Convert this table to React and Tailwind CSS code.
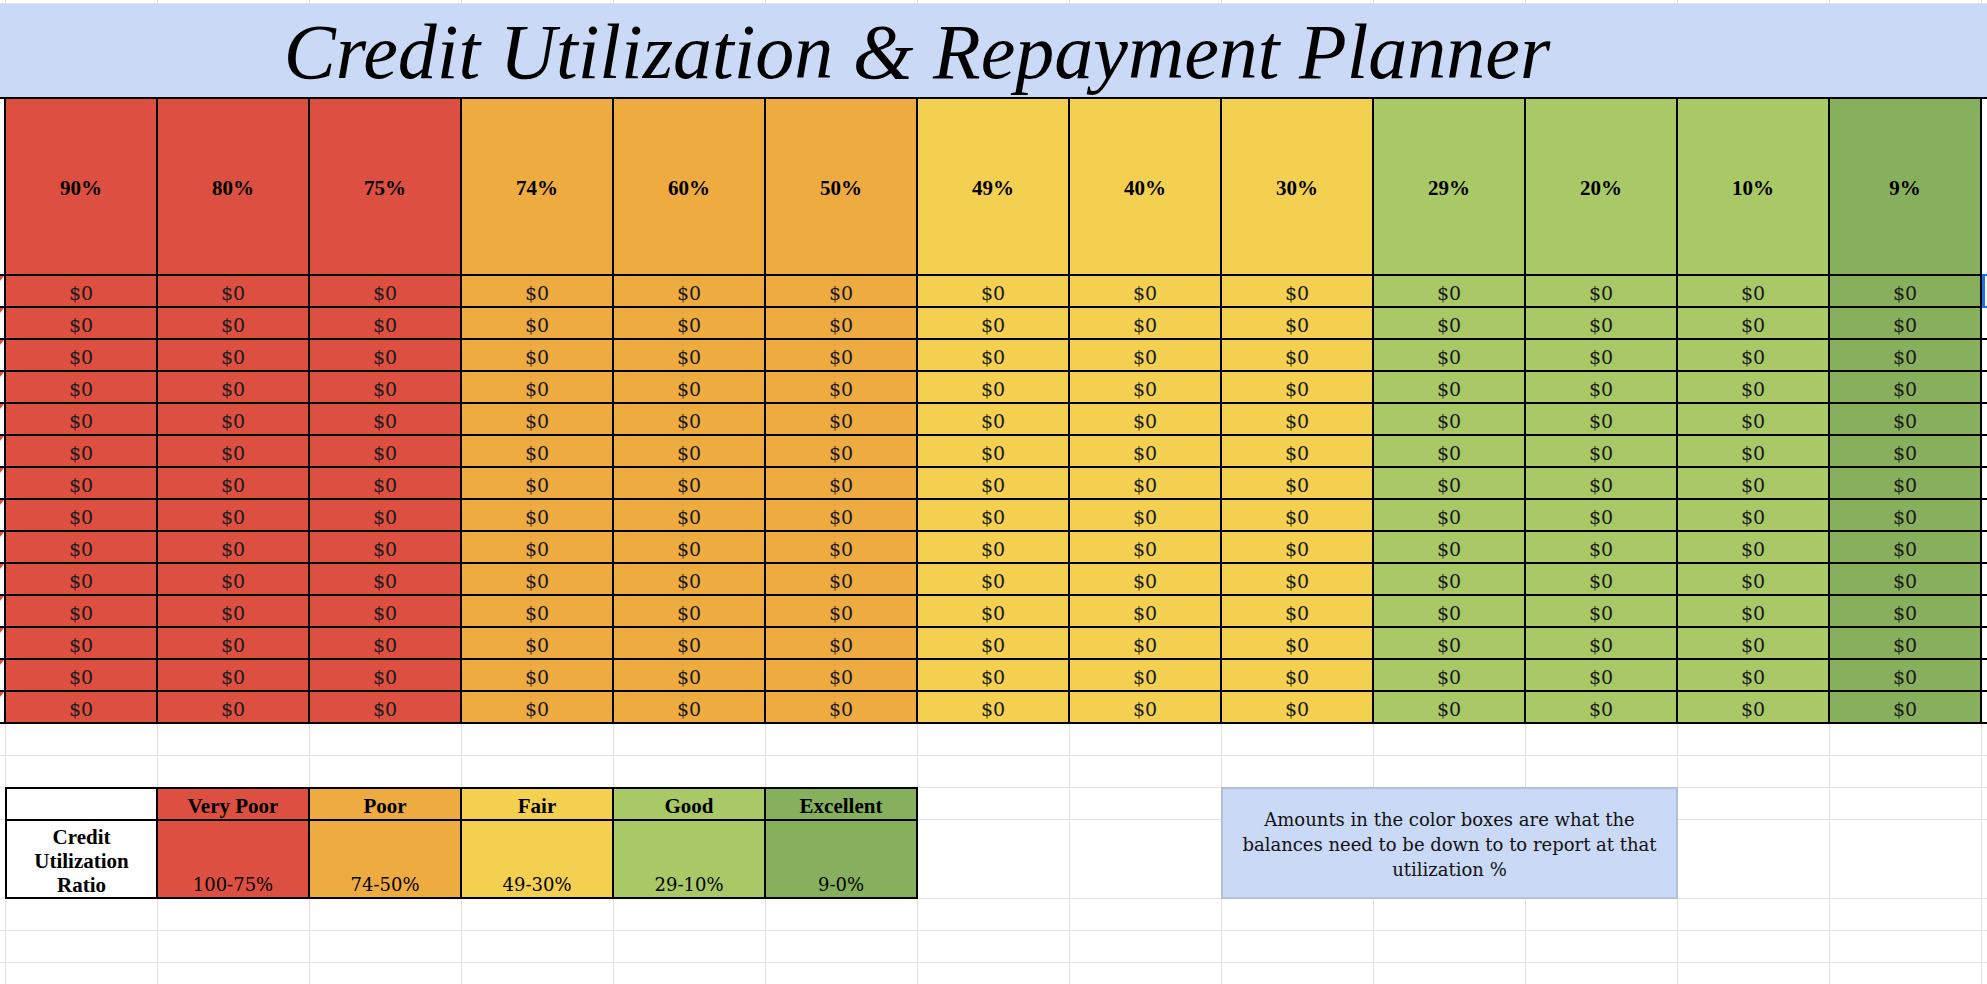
import React from "react";

const boldFont = "font-['Liberation_Serif',serif] font-bold";
const bodyFont = "font-['DejaVu_Serif',serif]";

const columns = [
  { pct: "90%", bg: "bg-[#dd4f41]" },
  { pct: "80%", bg: "bg-[#dd4f41]" },
  { pct: "75%", bg: "bg-[#dd4f41]" },
  { pct: "74%", bg: "bg-[#eeab40]" },
  { pct: "60%", bg: "bg-[#eeab40]" },
  { pct: "50%", bg: "bg-[#eeab40]" },
  { pct: "49%", bg: "bg-[#f3d04f]" },
  { pct: "40%", bg: "bg-[#f3d04f]" },
  { pct: "30%", bg: "bg-[#f3d04f]" },
  { pct: "29%", bg: "bg-[#a9c966]" },
  { pct: "20%", bg: "bg-[#a9c966]" },
  { pct: "10%", bg: "bg-[#a9c966]" },
  { pct: "9%", bg: "bg-[#87b05c]" },
];

const legend = [
  { name: "Very Poor", range: "100-75%", bg: "bg-[#dd4f41]" },
  { name: "Poor", range: "74-50%", bg: "bg-[#eeab40]" },
  { name: "Fair", range: "49-30%", bg: "bg-[#f3d04f]" },
  { name: "Good", range: "29-10%", bg: "bg-[#a9c966]" },
  { name: "Excellent", range: "9-0%", bg: "bg-[#87b05c]" },
];

const dataRows = Array.from({ length: 14 }, (_, i) => i);
const blankCells = Array.from({ length: 87 }, (_, i) => i);
const topCells = Array.from({ length: 15 }, (_, i) => i);

function CommentMark() {
  return (
    <svg width="4" height="5" viewBox="0 0 4 5" className="block">
      <polygon points="0,0 4,0 0,5" fill="#dd4f41" />
    </svg>
  );
}

function Legend() {
  return (
    <div className="col-start-2 col-span-6 row-start-3 row-span-2 -m-px grid grid-cols-[149px_repeat(5,150px)] grid-rows-[30px_76px] gap-[2px] bg-black p-[2px] text-black">
      <div className="bg-white" />
      {legend.map((l) => (
        <div
          key={l.name}
          className={`${l.bg} ${boldFont} pt-[2px] text-center text-[21px] leading-[30px]`}
        >
          {l.name}
        </div>
      ))}
      <div
        className={`flex items-end justify-center bg-white text-center text-[21px] leading-[24px] ${boldFont}`}
      >
        <span>
          Credit
          <br />
          Utilization
          <br />
          Ratio
        </span>
      </div>
      {legend.map((l) => (
        <div
          key={l.range}
          className={`${l.bg} ${bodyFont} flex items-end justify-center text-[18px] leading-[24px]`}
        >
          {l.range}
        </div>
      ))}
    </div>
  );
}

function Note() {
  return (
    <div
      className={`col-start-10 col-span-3 row-start-3 row-span-2 -m-px flex items-center justify-center border-2 border-[#b1bfd9] bg-[#cad9f5] pt-[2px] text-center text-[18px] leading-[25px] text-[#111] ${bodyFont}`}
    >
      <p>
        Amounts in the color boxes are what the
        <br />
        balances need to be down to to report at that
        <br />
        utilization %
      </p>
    </div>
  );
}

export default function App() {
  return (
    <div className="h-[984px] w-[1987px] overflow-hidden bg-white text-black">
      {/* sliver of the row above the title */}
      <div className="grid grid-cols-[5px_repeat(13,151px)_5px] gap-x-px bg-[#e2e2e2] pb-px">
        {topCells.map((i) => (
          <div key={i} className="h-[3px] bg-white" />
        ))}
      </div>

      {/* title */}
      <div className="flex h-[93px] items-start bg-[#cad9f5]">
        <div className="ml-[5px] w-[1824px] pt-[9px] text-center">
          <h1 className="font-['Liberation_Serif',serif] text-[78px] italic leading-none text-black">
            Credit Utilization &amp; Repayment Planner
          </h1>
        </div>
      </div>

      {/* balance table */}
      <div className="grid grid-cols-[4px_repeat(13,150px)_5px] grid-rows-[175px_repeat(14,30px)] gap-[2px] bg-black py-[2px]">
        <div className="bg-white" />
        {columns.map((c) => (
          <div
            key={c.pct}
            className={`${c.bg} ${boldFont} flex items-center justify-center pt-[4px] text-[21px]`}
          >
            {c.pct}
          </div>
        ))}
        <div className="bg-white" />

        {dataRows.map((r) => (
          <React.Fragment key={r}>
            <div className="bg-white">
              <CommentMark />
            </div>
            {columns.map((c) => (
              <div
                key={c.pct}
                className={`${c.bg} ${bodyFont} pt-[2px] text-center text-[19px] leading-[30px] text-[#1a1a1a]`}
              >
                $0
              </div>
            ))}
            {r === 0 ? (
              <div className="-my-[2px] border-y-2 border-l-[3px] border-[#1a73e8] bg-white" />
            ) : (
              <div className="bg-white" />
            )}
          </React.Fragment>
        ))}
      </div>

      {/* lower sheet area with legend and note */}
      <div className="grid grid-cols-[5px_repeat(13,151px)_5px] grid-rows-[31px_31px_31px_78px_31px_31px_31px] gap-px bg-[#e2e2e2]">
        <Legend />
        <Note />
        {blankCells.map((i) => (
          <div key={i} className="bg-white" />
        ))}
      </div>
    </div>
  );
}
